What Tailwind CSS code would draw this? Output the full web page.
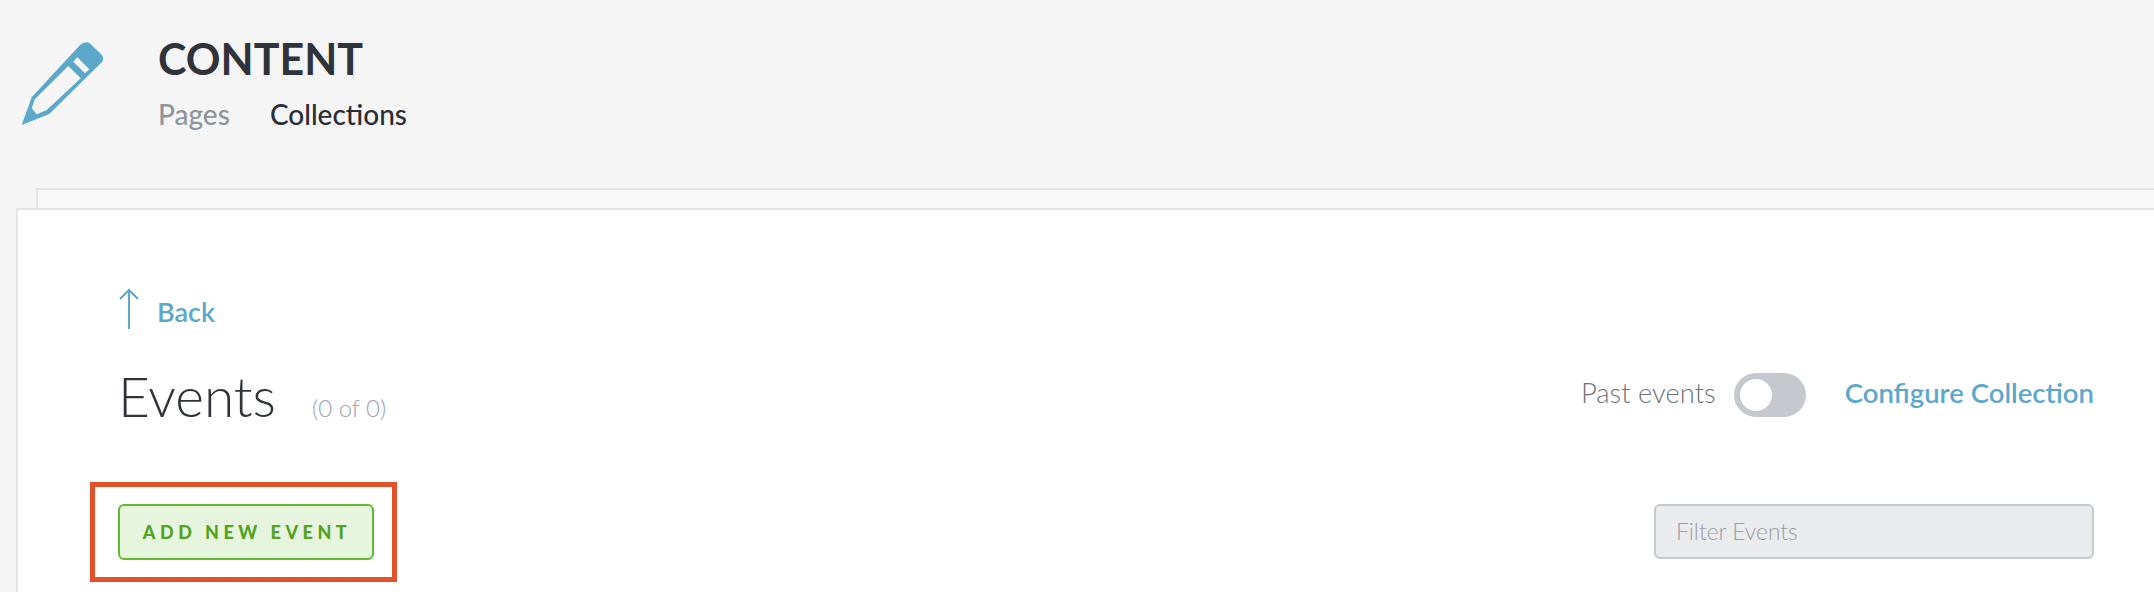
<!DOCTYPE html>
<html lang="en">
<head>
  <meta charset="UTF-8">
  <title>Events</title>
  <script src="https://cdn.jsdelivr.net/npm/@tailwindcss/browser@4"></script>
</head>
<body class="bg-[#f5f5f5] text-[#30333a] font-['Lato',sans-serif] h-[592px] overflow-hidden">
  <header class="h-[188px] flex items-start">
    <svg class="w-[84px] h-[86px] ml-[20px] mt-[41px] shrink-0" viewBox="0 0 84 86">
      <path fill="#5ca8cb" fill-rule="evenodd" d="M1.7 84 L11.7 56.3 L60 4 Q65 -0.5 70 2.5 L81.5 13.5 Q84.5 17.5 82 21 L29.3 73 Z M48.3 25 L15 58 L11.7 67.3 L16.7 73.3 L26.7 69 L60.7 37.3 Z M53.3 20.7 L65 32.3 L69.3 28.3 L57.3 16.3 Z"/>
    </svg>
    <div class="ml-[54px] pt-[35px]">
      <h1 class="text-[43px] leading-[48px] font-bold">CONTENT</h1>
      <nav class="flex gap-[40px] mt-[14px] text-[28px] leading-[34px] font-medium">
        <a class="text-[#8f959d]">Pages</a>
        <a class="text-[#2b2e35]">Collections</a>
      </nav>
    </div>
  </header>

  <div class="ml-[36px] h-[20px] bg-[#f9f9f9] border-t-2 border-l-2 border-[#e4e4e4]"></div>
  <main class="ml-[16px] h-[384px] bg-white border-t-2 border-l-2 border-[#e4e4e4] pl-[100px] pr-[60px]">
    <a class="flex items-center mt-[78px] text-[#5ca8cb] text-[27px] leading-[44px] font-semibold">
      <svg class="w-[20px] h-[42px] ml-[1px] shrink-0 -translate-y-[1px]" viewBox="0 0 20 42" fill="none" stroke="#5ca8cb" stroke-width="2">
        <path d="M10 41 V2 M1 11 L10 2 L19 11"/>
      </svg>
      <span class="ml-[18px] translate-y-[2px]">Back</span>
    </a>
    <div class="flex items-center justify-between mt-[30px] h-[62px]">
      <div class="flex items-baseline pt-[5px]">
        <h2 class="text-[55px] leading-[62px] font-light">Events</h2>
        <span class="ml-[36px] text-[24px] font-light text-[#9ea3aa]">(0 of 0)</span>
      </div>
      <div class="flex items-center">
        <span class="text-[27.4px] font-light text-[#6f7378]">Past events</span>
        <span class="ml-[18px] w-[72px] h-[44px] rounded-full bg-[#c5c8cc] p-[6px] translate-y-[2px]">
          <span class="block w-[32px] h-[32px] rounded-full bg-white"></span>
        </span>
        <a class="ml-[39px] text-[27.5px] font-semibold text-[#5ca8cb]">Configure Collection</a>
      </div>
    </div>
    <div class="flex items-start justify-between mt-[58px]">
      <div class="-ml-[28px] border-[5px] border-[#e4522b] pt-[17px] pb-[17px] pl-[23px] pr-[18px]">
        <button class="block w-[256px] h-[56px] rounded-[6px] border-2 border-[#62bb2e] bg-[#e7f4de] text-[#52a31f] text-[18px] font-black tracking-[0.25em] pl-[2px]">ADD NEW EVENT</button>
      </div>
      <div class="w-[440px] h-[55px] mt-[22px] rounded-[6px] border-2 border-[#c5c8cc] bg-[#eaebed] pl-[20px] flex items-center text-[22.8px] font-light text-[#9a9da2]">Filter Events</div>
    </div>
  </main>
</body>
</html>
